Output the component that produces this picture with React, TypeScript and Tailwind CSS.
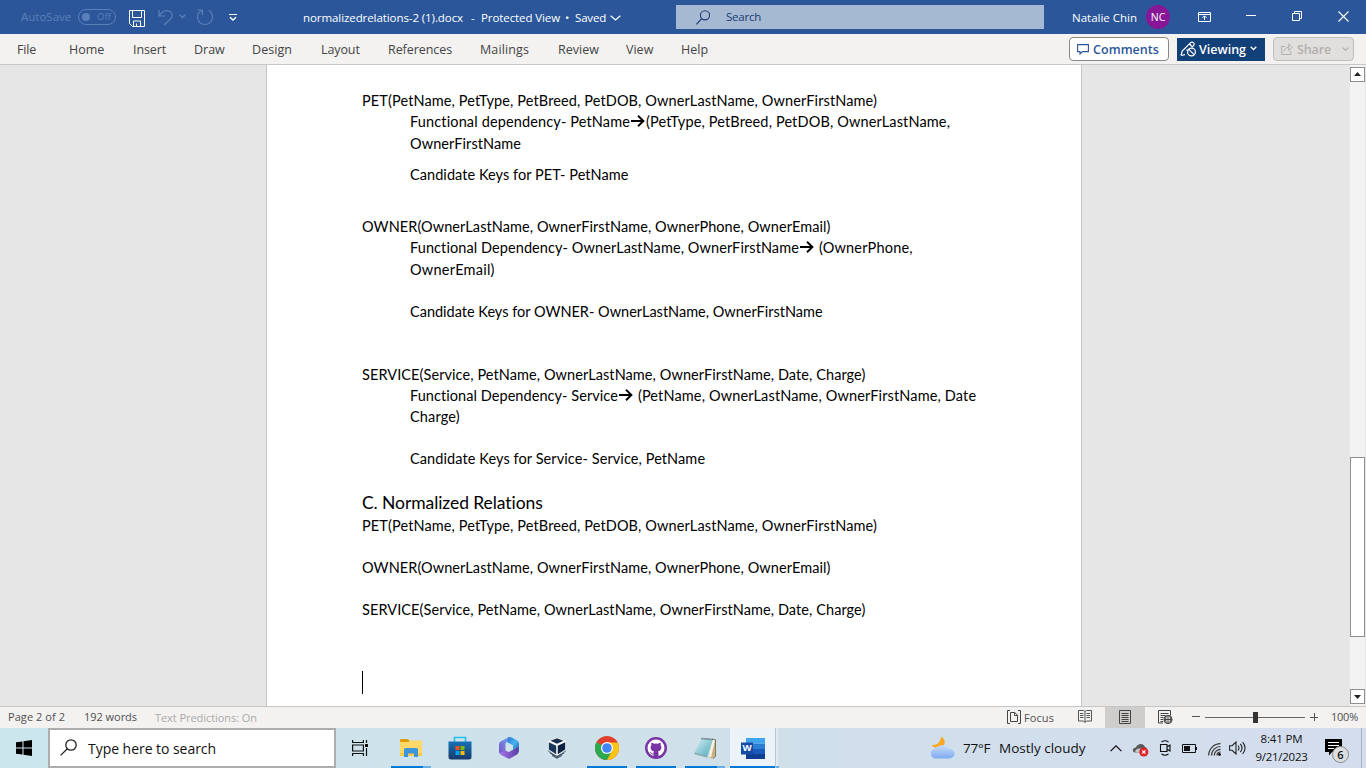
import type { ReactNode } from "react";

const Svg = ({ w, h, className = "", children }: { w: number; h: number; className?: string; children: ReactNode }) => (
  <svg width={w} height={h} viewBox={`0 0 ${w} ${h}`} fill="none" className={`shrink-0 ${className}`}>
    {children}
  </svg>
);

const tabs: [string, string][] = [
  ["File", "w-[52px] tracking-[-0.15px]"],
  ["Home", "w-[64px]"],
  ["Insert", "w-[61px] tracking-[-0.1px]"],
  ["Draw", "w-[58px]"],
  ["Design", "w-[69px] tracking-[0.06px]"],
  ["Layout", "w-[67px] tracking-[-0.1px]"],
  ["References", "w-[92px] tracking-[-0.07px]"],
  ["Mailings", "w-[78px] tracking-[0.11px]"],
  ["Review", "w-[68px]"],
  ["View", "w-[55px]"],
  ["Help", "w-[50px]"],
];

function TitleBar() {
  return (
    <header className="flex h-[34px] shrink-0 items-center bg-[#2b579a] text-[11.5px] text-white">
      <div className="flex w-[303px] items-center pl-[21px] text-[#5a80b9]">
        <span className="w-[57px]">AutoSave</span>
        <div className="mt-[-1px] flex h-4 w-[38px] items-center rounded-full border border-[#5a80b9] pl-[3px] text-[9.5px]">
          <span className="mr-[7px] size-2 rounded-full bg-[#5a80b9]" />
          Off
        </div>
        <Svg w={16} h={17} className="ml-[13px] mt-[2px] text-white">
          <path d="M.5.5h15v16h-12l-3-3zM3.5.5v7h9v-7M4.5 16v-5h7v5M7.5 13.5v3" stroke="currentColor" />
        </Svg>
        <Svg w={16} h={17} className="ml-[13px]">
          <path d="M1 1v6h6M1.4 6.6C4 2 9 .3 12.3 2.6c3 2.2 2.2 5.4 0 7.6L6 16" stroke="currentColor" strokeWidth="1.2" />
        </Svg>
        <Svg w={7} h={5} className="ml-[5px] mt-[-1px]">
          <path d="M.7.7 3.5 3.5 6.3.7" stroke="currentColor" strokeWidth="1.4" />
        </Svg>
        <Svg w={18} h={17} className="ml-[10px] mt-[1px]">
          <path d="M1.5 1h5v5M6.2 1.7C3.3 2.6 1.5 5 1.5 8c0 4.3 3.3 7.5 7.5 7.5s7.5-3.2 7.5-7.5c0-2.8-1.5-5.2-3.8-6.5" stroke="currentColor" strokeWidth="1.2" />
        </Svg>
        <Svg w={8} h={7} className="ml-[15px] text-white">
          <path d="M0 .5h8" stroke="currentColor" />
          <path d="M1 3.2 4 6l3-2.8" stroke="currentColor" strokeWidth="1.4" />
        </Svg>
      </div>
      <div className="flex w-[373px] items-center pt-[1px]">
        <span className="w-[168px] tracking-[-0.08px]">normalizedrelations-2 (1).docx</span>
        <span className="w-[10px]">-</span>
        <span className="w-[84px] tracking-[-0.09px]">Protected View</span>
        <span className="w-[10px]">•</span>
        <span className="w-[35px] tracking-[-0.18px]">Saved</span>
        <Svg w={11} h={6}>
          <path d="m.7.7 4.8 4.3 4.8-4.3" stroke="currentColor" strokeWidth="1.2" />
        </Svg>
      </div>
      <div className="flex h-6 w-[368px] items-center bg-[#a6b9d3] pl-5 text-[#1b3b70]">
        <Svg w={14} h={15}>
          <circle cx="9" cy="5.3" r="4.6" stroke="currentColor" strokeWidth="1.1" />
          <path d="M5.7 8.7.5 14.3" stroke="currentColor" strokeWidth="1.2" />
        </Svg>
        <span className="ml-4 tracking-[-0.2px]">Search</span>
      </div>
      <span className="ml-7 w-[74px] pt-[1px]">Natalie Chin</span>
      <span className="flex size-6 items-center justify-center rounded-full bg-[#881798] text-[10.5px]">NC</span>
      <Svg w={13} h={10} className="ml-7 mt-[-1px]">
        <path d="M.5.5h12v9H.5zM.5 2.5h12M6.5 8V4M4.5 5.8l2-2 2 2" stroke="currentColor" />
      </Svg>
      <Svg w={10} h={1} className="ml-[35px] mt-[-3px]">
        <path d="M0 .5h10" stroke="currentColor" />
      </Svg>
      <Svg w={10} h={10} className="ml-9 mt-[-2px]">
        <path d="M.5 2.5h7v7h-7zM2.5 2.5v-2h7v7h-2" stroke="currentColor" />
      </Svg>
      <Svg w={11} h={11} className="ml-9 mt-[-2px]">
        <path d="m.5.5 10 10M10.5.5l-10 10" stroke="currentColor" strokeWidth="1.1" />
      </Svg>
    </header>
  );
}

function Ribbon() {
  return (
    <nav className="flex h-[31px] shrink-0 items-center border-b border-[#c8c8c8] bg-[#f3f2f1] text-[12.5px] text-[#444]">
      <div className="flex w-[1069px] pl-[17px] pt-[2px]">
        {tabs.map(([name, style]) => (
          <span key={name} className={style}>{name}</span>
        ))}
      </div>
      <button className="flex h-6 w-[100px] items-center rounded border border-[#8a8886] bg-white pl-[7px] font-semibold text-[#2b579a]">
        <Svg w={12} h={11}>
          <path d="M.6.6h10.8v7H5.5L3 10V7.6H.6z" stroke="currentColor" strokeWidth="1.1" />
        </Svg>
        <span className="ml-1 mt-[2px] tracking-[0.05px]">Comments</span>
      </button>
      <button className="ml-2 flex h-[23px] w-[88px] items-center bg-[#124078] pl-[3px] font-semibold text-white">
        <Svg w={17} h={16}>
          <path d="M1 14.5 2.2 10 10.7 1.6c1.7-1.6 4.5.8 3 2.8l-1.5 1.7M1 14.5l4-.8M9.5 3l3.3 3.2M6.5 9.5l1-1" stroke="currentColor" strokeWidth="1.2" />
          <circle cx="11.5" cy="11" r="3.9" stroke="currentColor" strokeWidth="1.2" />
          <path d="m8.8 8.3 5.4 5.4" stroke="currentColor" strokeWidth="1.2" />
        </Svg>
        <span className="ml-[2px] mt-[2px]">Viewing</span>
        <Svg w={7} h={5} className="ml-1 mt-[-1px]">
          <path d="M.7.7 3.5 3.5 6.3.7" stroke="currentColor" strokeWidth="1.3" />
        </Svg>
      </button>
      <button className="ml-2 flex h-6 w-[81px] items-center rounded border border-[#c0bebc] bg-[#e1dfdd] pl-[7px] font-semibold text-[#b1afad]">
        <Svg w={12} h={12}>
          <path d="M4 3.5H.6v8h9.3V8M3 8.5c.4-2.5 2-4 4.8-4.2M7.8 1l3.4 3.3-3.4 3.4z" stroke="currentColor" />
        </Svg>
        <span className="ml-1 mt-[2px] tracking-[-0.1px]">Share</span>
        <Svg w={7} h={5} className="ml-[11px]">
          <path d="M.7.7 3.5 3.5 6.3.7" stroke="currentColor" strokeWidth="1.2" />
        </Svg>
      </button>
    </nav>
  );
}

const Arrow = ({ className = "" }: { className?: string }) => (
  <Svg w={14} h={12} className={`inline-block align-[0.5px] ${className}`}>
    <path d="M0 6h12.5M7 .8 12.4 6 7 11.2" stroke="currentColor" strokeWidth="1.9" />
  </Svg>
);

const Line = ({ className, children }: { className: string; children: ReactNode }) => (
  <p className={`h-[21px] whitespace-nowrap ${className}`}>{children}</p>
);

function Page() {
  return (
    <article className="w-[816px] border-x border-[#c6c6c6] bg-white pl-[95px] pt-[25px] font-[Lato,Carlito,sans-serif] text-[14.5px] leading-[21px] text-black">
      <Line className="tracking-[0.119px]">PET(PetName, PetType, PetBreed, PetDOB, OwnerLastName, OwnerFirstName)</Line>
      <Line className="pl-12">
        <span className="tracking-[0.14px]">Functional dependency- PetName</span>
        <Arrow className="ml-px mr-px" />
        <span className="tracking-[0.14px]">(PetType, PetBreed, PetDOB, OwnerLastName,</span>
      </Line>
      <Line className="mt-px pl-12 tracking-[0.08px]">OwnerFirstName</Line>
      <Line className="mt-[10px] pl-12 tracking-[0.06px]">Candidate Keys for PET- PetName</Line>

      <Line className="mt-[31px] tracking-[0.08px]">OWNER(OwnerLastName, OwnerFirstName, OwnerPhone, OwnerEmail)</Line>
      <Line className="pl-12">
        <span className="tracking-[0.085px]">Functional Dependency- OwnerLastName, OwnerFirstName</span>
        <Arrow className="ml-px mr-[5px]" />
        <span className="tracking-[0.2px]">(OwnerPhone,</span>
      </Line>
      <Line className="mt-px pl-12 tracking-[0.25px]">OwnerEmail)</Line>
      <Line className="mt-[21px] pl-12">Candidate Keys for OWNER- OwnerLastName, OwnerFirstName</Line>

      <Line className="mt-[42px] tracking-[0.08px]">SERVICE(Service, PetName, OwnerLastName, OwnerFirstName, Date, Charge)</Line>
      <Line className="pl-12">
        <span className="tracking-[0.06px]">Functional Dependency- Service</span>
        <Arrow className="ml-px mr-[5px]" />
        <span className="tracking-[0.14px]">(PetName, OwnerLastName, OwnerFirstName, Date</span>
      </Line>
      <Line className="pl-12 tracking-[0.15px]">Charge)</Line>
      <Line className="mt-[21px] pl-12 tracking-[0.09px]">Candidate Keys for Service- Service, PetName</Line>

      <Line className="mt-[23px] text-[17.5px] tracking-[-0.077px]">C. Normalized Relations</Line>
      <Line className="mt-[2px] tracking-[0.119px]">PET(PetName, PetType, PetBreed, PetDOB, OwnerLastName, OwnerFirstName)</Line>
      <Line className="mt-[21px] tracking-[0.08px]">OWNER(OwnerLastName, OwnerFirstName, OwnerPhone, OwnerEmail)</Line>
      <Line className="mt-[21px] tracking-[0.08px]">SERVICE(Service, PetName, OwnerLastName, OwnerFirstName, Date, Charge)</Line>
      <div className="mt-[51px] h-[23px] w-px bg-black" />
    </article>
  );
}

function ScrollBar() {
  return (
    <div className="mr-px flex w-[15px] flex-col bg-[#f3f3f3] pb-[2px] pt-[2px]">
      <div className="flex h-[15px] items-center justify-center border border-[#8f8f8f] bg-white pb-px">
        <Svg w={7} h={4}>
          <path d="M0 4h7L3.5 0z" fill="#222" />
        </Svg>
      </div>
      <div className="mt-[375px] h-[180px] border border-[#8f8f8f] bg-white" />
      <div className="mt-auto flex h-[15px] items-center justify-center border border-[#8f8f8f] bg-white">
        <Svg w={7} h={4}>
          <path d="M0 0h7L3.5 4z" fill="#222" />
        </Svg>
      </div>
    </div>
  );
}

function StatusBar() {
  return (
    <footer className="flex h-[22px] shrink-0 items-center border-t border-[#c6c6c6] bg-[#f3f2f1] text-[11px] text-[#505050]">
      <span className="w-[84px] pb-[2px] pl-2 tracking-[0.06px]">Page 2 of 2</span>
      <span className="w-[71px] pb-[2px] tracking-[-0.04px]">192 words</span>
      <span className="w-[852px] tracking-[-0.06px] text-[#a9a9a9]">Text Predictions: On</span>
      <Svg w={14} h={14} className="mt-[-2px]">
        <path d="M3 .5H.5v13H3M11 .5h2.5v13H11M3.5 2.5h4.3l2.7 2.7v6.3h-7zM7.5 2.5v3h3" stroke="#444" />
      </Svg>
      <span className="ml-[3px] w-[54px] tracking-[0.09px]">Focus</span>
      <Svg w={14} h={13} className="mt-[-2px]">
        <path d="M7 1.5v11M.5.5H5.5L7 1.5 8.5.5h5v10.5H8.5L7 12.5 5.5 11H.5zM2 3.5h3.5M2 5.5h3.5M2 7.5h3.5M8.5 3.5H12M8.5 5.5H12M8.5 7.5H12" stroke="#555" />
      </Svg>
      <div className="ml-[13px] flex h-[21px] w-10 items-center justify-center bg-[#cfcdcb]">
        <Svg w={12} h={14} className="mt-[-2px]">
          <path d="M.5.5h11v13H.5zM2.5 3.5h7M2.5 5.5h7M2.5 7.5h7M2.5 9.5h7M2.5 11.5h7" stroke="#444" />
        </Svg>
      </div>
      <Svg w={15} h={14} className="ml-[13px] mt-[-1px]">
        <path d="M5 13H.5V.5h12v5M2.5 3.5h8M2.5 5.5h5M2.5 7.5h3M2.5 9.5h2.5M2.5 11.5h2.5" stroke="#444" />
        <circle cx="10" cy="9.5" r="3.9" stroke="#444" strokeWidth="1.2" />
        <path d="M6 9.5h8M10 5.5v8M8 6.5q-1 3 0 6M12 6.5q1 3 0 6" stroke="#444" />
      </Svg>
      <Svg w={8} h={1} className="ml-[19px] mt-[-2px]">
        <path d="M0 .5h8" stroke="#555" />
      </Svg>
      <div className="ml-[5px] flex h-[11px] w-[100px] items-center">
        <span className="h-px w-[48px] bg-[#666]" />
        <span className="h-[11px] w-[5px] bg-[#333]" />
        <span className="h-px flex-1 bg-[#666]" />
      </div>
      <Svg w={8} h={8} className="ml-[5px] mt-[-2px]">
        <path d="M0 4.5h8M4.5 0v8" stroke="#555" />
      </Svg>
      <span className="ml-[13px] pb-[2px] tracking-[-0.24px]">100%</span>
    </footer>
  );
}

const ExplorerIcon = () => (
  <Svg w={22} h={20}>
    <path d="M0 3a2 2 0 0 1 1-2h7l2 2.5v3H0z" fill="#dc9a08" />
    <path d="M0 4h8.5l1.5-1.5h12V18H0z" fill="#ffd867" />
    <path d="M0 15h22v3H0z" fill="#fcc847" />
    <path d="M4 19v-7.5a1.5 1.5 0 0 1 1.5-1.5h11a1.5 1.5 0 0 1 1.5 1.5V19h-4v-3.5H8V19z" fill="#3c96dc" />
  </Svg>
);

const StoreIcon = () => (
  <Svg w={24} h={24}>
    <defs>
      <linearGradient id="store" x1="0" y1="0" x2="0" y2="1">
        <stop stopColor="#1770b5" />
        <stop offset="1" stopColor="#163a6b" />
      </linearGradient>
    </defs>
    <path d="M6.5 7V1.5h11V7" stroke="#24bff0" strokeWidth="1.6" />
    <path d="M.5 5.5h23V21a2.5 2.5 0 0 1-2.5 2.5H3A2.5 2.5 0 0 1 .5 21z" fill="url(#store)" />
    <path d="M7.500 10h4v4h-4z" fill="#f25022" />
    <path d="M12.500 10h4v4h-4z" fill="#7fba00" />
    <path d="M7.500 15h4v4h-4z" fill="#00a4ef" />
    <path d="M12.500 15h4v4h-4z" fill="#ffb900" />
  </Svg>
);

const M365Icon = () => (
  <Svg w={22} h={24}>
    <defs>
      <linearGradient id="m1" x1="0" y1="1" x2="1" y2="0">
        <stop stopColor="#7c50c8" />
        <stop offset="1" stopColor="#6fa8ee" />
      </linearGradient>
      <linearGradient id="m2" x1="0" y1="0" x2="1" y2="1">
        <stop stopColor="#2d6fd0" />
        <stop offset=".5" stopColor="#45b5f0" />
        <stop offset="1" stopColor="#264fa8" />
      </linearGradient>
      <linearGradient id="m3" x1="0" y1="0" x2="1" y2="0">
        <stop stopColor="#a877ea" />
        <stop offset="1" stopColor="#5a3da5" />
      </linearGradient>
    </defs>
    <path d="M11 1 2.5 5.500Q1 6.500 1 8.500v7q0 2.500 2.500 2.500L7.500 15V8.500Q7.500 6 11 5z" fill="url(#m1)" />
    <path d="M10 1.500q2-1 4 0l5.500 3.200Q21 5.700 21 7.500v7q0 2-2 2.500l-4-3V9.500L9 6z" fill="url(#m2)" />
    <path d="m1.500 17 6-2.500 3 1.600L20.500 11v4.500q0 2-1.500 3l-6.500 3.700q-1.500.9-3 0L3 19z" fill="url(#m3)" />
    <path d="M8 9.500 11 7.800l3.300 1.800v4.200L11 15.700l-3-1.800z" fill="#cfe3ec" />
  </Svg>
);

const BoxIcon = () => (
  <Svg w={20} h={24}>
    <path d="M1 4.500v11L10 23l9-7.500v-11L10 1z" fill="#8292a4" />
    <path d="M1 4.500 10 1l9 3.500v9.500L10 20 1 14z" fill="#f5f7fa" />
    <path d="M3.500 4.700 10 2.200l6.500 2.500L10 7.800z" fill="#15304f" />
    <path d="M1.800 6.200 9.200 9.800v8.400L1.800 13.500z" fill="#183758" />
    <path d="m10.800 9.800 7.400-3.600v7.300l-7.400 4.700z" fill="#0b2340" />
    <path d="m3 17 7 3.500 7-3.500M5 19.500l5 2.500 5-2.500" stroke="#34485e" />
  </Svg>
);

const ChromeIcon = () => (
  <Svg w={24} h={24}>
    <circle cx="12" cy="12" r="12" fill="#e2402f" />
    <path d="M12 12 1.600 6A12 12 0 0 0 12 24l5.200-9z" fill="#2da94f" />
    <path d="M12 6.500h10.700A12 12 0 0 1 12 24l5-9z" fill="#fdc418" />
    <circle cx="12" cy="12" r="6" fill="#fff" />
    <circle cx="12" cy="12" r="4.800" fill="#4285f4" />
  </Svg>
);

const GithubIcon = () => (
  <Svg w={22} h={22}>
    <circle cx="11" cy="11" r="11" fill="#7a35a5" />
    <circle cx="11" cy="11" r="8.500" fill="#fff" />
    <path d="M8.800 17c-2.200.4-2.600-1-3.600-2" stroke="#7a35a5" />
    <path d="M6.500 5.800c1.200 0 2 .6 2.500 1q2-.4 4 0c.5-.4 1.300-1 2.500-1 .4 1 .3 1.700.1 2.200 1.600 2.300.8 5.800-2.600 6.300.4.500.5 1 .5 1.800V20h-5v-3.900c0-.8.100-1.300.5-1.800-3.400-.5-4.200-4-2.600-6.300-.2-.5-.3-1.200.1-2.200z" fill="#7a35a5" />
  </Svg>
);

const NotepadIcon = () => (
  <Svg w={24} h={24}>
    <defs>
      <linearGradient id="note" x1="0" y1="0" x2="1" y2="1">
        <stop stopColor="#d3eef3" />
        <stop offset="1" stopColor="#4ea9b9" />
      </linearGradient>
    </defs>
    <path d="m19 3 4 .8-1 16.700-2 2-4-.5z" fill="#c9b282" />
    <path d="m19 3 3 1-4 17.500-2-1z" fill="#f6f2e5" />
    <path d="m19 3 3.500.8v16.700l-2.500 2" stroke="#6d6048" strokeWidth=".8" />
    <path d="M8.500 2.500 20 3.500 14 21.500 1 18z" fill="url(#note)" />
    <path d="m1 18 13 3.500.7-1.800L2 16.500z" fill="#88aeb3" />
    <path d="m8.500 2.500 11.500 1" stroke="#576f74" strokeWidth="1.800" strokeDasharray="1.200 .8" />
  </Svg>
);

const WordIcon = () => (
  <div className="relative">
    <Svg w={25} h={23}>
      <path d="M6 1h19v5.500H6z" fill="#41a5ee" />
      <path d="M6 6.500h19V12H6z" fill="#2b7cd3" />
      <path d="M6 12h19v5H6z" fill="#185abd" />
      <path d="M6 17h19v5H6z" fill="#103f91" />
      <path d="M1 5.500h12v12H1z" fill="#174ca5" />
    </Svg>
    <span className="absolute left-px top-[5.5px] w-3 text-center text-[9.5px] font-bold leading-3 text-white">W</span>
  </div>
);

const AppSlot = ({ icon, bar = "", tail = "", className = "" }: { icon: ReactNode; bar?: string; tail?: string; className?: string }) => (
  <div className={`flex h-10 w-[49px] flex-col items-center ${className}`}>
    <div className="flex h-[38px] items-center pt-[2px]">{icon}</div>
    <div className="flex h-[2px]">
      <span className={`bg-[#0078d7] ${bar}`} />
      <span className={`bg-[#6aaee6] ${tail}`} />
    </div>
  </div>
);

function Tray() {
  return (
    <>
      <Svg w={26} h={24} className="ml-[150px]">
        <defs>
          <linearGradient id="cloud" x1="0" y1="0" x2="0" y2="1">
            <stop stopColor="#c8dcfb" />
            <stop offset="1" stopColor="#7daaf0" />
          </linearGradient>
        </defs>
        <path d="M11 .5c5 3 5 8 0 11-4 1.500-8 0-9.500-2.500C7 9.500 11 6 11 .5z" fill="#f7a823" />
        <path d="M6 22.500a5 5 0 0 1-.5-10c1.500-3.500 10-5 12.500 0 8.500.5 8.500 9.500 1 10z" fill="url(#cloud)" />
      </Svg>
      <span className="ml-[7px] w-9 pt-px text-[13.5px] tracking-[-0.2px]">77°F</span>
      <span className="w-[111px] pt-px text-[13.5px]">Mostly cloudy</span>
      <Svg w={12} h={7}>
        <path d="m.6 6.200 5.400-5.400 5.400 5.400" stroke="#111" strokeWidth="1.200" />
      </Svg>
      <Svg w={17} h={14} className="ml-[10px] mt-[3px]">
        <path d="M2.500 9.500C-.5 8 1 4.500 4 4.500 5 .5 11.500-.5 13 4c2 .5 2.500 3 1 5.500z" fill="#5a5a5a" />
        <path d="M3 9.500C3 6 8 4 11 7v2.500z" fill="#c8c8c8" />
        <circle cx="11.800" cy="9" r="4.600" fill="#e0242c" />
        <path d="m10.200 7.400 3.200 3.200M13.400 7.400l-3.200 3.200" stroke="#fff" strokeWidth="1.200" />
      </Svg>
      <Svg w={12} h={16} className="ml-[10px]">
        <path d="M1.500 4.500h6.500v7H1.500zM8 7l3-2v6L8 9M2.500 2Q6-.5 9.500 2M2.500 14q3.500 2.500 7 0" stroke="#111" strokeWidth="1.100" />
      </Svg>
      <Svg w={16} h={9} className="ml-[11px] mt-px">
        <path d="M.500.500h13v8H.500zM14.500 3v3" stroke="#111" />
        <path d="M2 2h6v5H2z" fill="#111" />
      </Svg>
      <Svg w={13} h={13} className="ml-[10px] mt-[3px]">
        <path d="M.700 12.500C.700 6 6 .700 12.500.700M3.500 12.500c0-5 4-9 9-9M6.300 12.500c0-3.500 2.700-6.200 6.200-6.200M9 12.500C9 10.500 10.500 9 12.500 9" stroke="#333" strokeWidth="1.200" />
        <circle cx="11.500" cy="11.500" r="1.400" fill="#111" />
      </Svg>
      <Svg w={17} h={14} className="ml-2">
        <path d="M.600 4.700h2.500L7 1v12L3.100 9.300H.600zM9 4.500q2 2.500 0 5M11.300 2.800q3.500 4.200 0 8.400M13.600 1.200q5 5.800 0 11.600" stroke="#222" strokeWidth="1.100" />
      </Svg>
      <div className="ml-[7px] flex w-[57px] flex-col items-center pb-px text-[11.5px] leading-[18px]">
        <span className="tracking-[-0.14px]">8:41 PM</span>
        <span className="tracking-[-0.27px]">9/21/2023</span>
      </div>
      <div className="relative ml-[15px] mt-[-2px]">
        <Svg w={17} h={17}>
          <path d="M0 0h17v13H7l-3 3.500V13H0z" fill="#000" />
          <path d="M3 3.500h11M3 6.500h11M3 9.500h6" stroke="#fff" />
        </Svg>
        <span className="absolute left-[7px] top-[7px] flex size-[17px] items-center justify-center rounded-full border border-[#888] bg-[#dcdfe2] text-[11px] font-semibold">6</span>
      </div>
      <span className="ml-auto mr-1 h-10 w-px bg-[#a9b4c2]" />
    </>
  );
}

function TaskBar() {
  return (
    <footer className="flex h-10 shrink-0 items-center bg-gradient-to-r from-[#cce6ee] via-[#cfe0ea] to-[#d4ddee] text-[#111]">
      <Svg w={16} h={16} className="mx-4">
        <path d="M0 2.300 6.500 1.400v6.100H0zM7.500 1.200 16 0v7.500H7.500zM0 8.500h6.500v6.100L0 13.700zM7.500 8.500H16V16l-8.500-1.200z" fill="#000" />
      </Svg>
      <div className="flex h-10 w-[288px] items-center border-2 border-[#adadad] bg-white pl-[10px] text-[14px]">
        <Svg w={17} h={17} className="mt-[-1px]">
          <circle cx="11" cy="6" r="5.200" stroke="#222" strokeWidth="1.300" />
          <path d="M7.300 9.700.600 16.400" stroke="#222" strokeWidth="1.300" />
        </Svg>
        <span className="ml-[11px] pt-[2px] tracking-[-0.04px]">Type here to search</span>
      </div>
      <Svg w={17} h={16} className="ml-4 mr-[17px] mt-[-1px]">
        <path d="M.600 0v2.500h10.800V0M.600 5h10.800v6H.600zM.600 16v-2.500h10.800V16M14.500 0v3M14.500 8v8" stroke="#111" strokeWidth="1.200" />
        <path d="M13 4h3v3h-3z" fill="#111" />
      </Svg>
      <AppSlot icon={<ExplorerIcon />} bar="w-8" tail="w-2" />
      <AppSlot icon={<StoreIcon />} />
      <AppSlot icon={<M365Icon />} />
      <AppSlot icon={<BoxIcon />} className="pr-[2px]" />
      <AppSlot icon={<ChromeIcon />} bar="w-10" />
      <AppSlot icon={<GithubIcon />} bar="w-10" />
      <AppSlot icon={<NotepadIcon />} bar="w-8" tail="w-2" />
      <div className="flex h-10 w-[49px] pl-px">
        <AppSlot icon={<WordIcon />} bar="w-[45px]" className="w-[45px]! bg-[#ebf3f8]" />
        <AppSlot icon={null} tail="w-[3px]" className="w-[3px]! border-l border-[#b4c6d3] bg-[#dfeaf1]" />
      </div>
      <div className="w-[2px]" />
      <Tray />
    </footer>
  );
}

export default function App() {
  return (
    <div className="flex h-[768px] w-[1366px] flex-col overflow-hidden font-['Open_Sans','Noto_Sans',sans-serif] leading-none">
      <TitleBar />
      <Ribbon />
      <main className="flex min-h-0 flex-1 bg-[#e6e6e6] pl-[266px]">
        <Page />
        <div className="ml-auto flex">
          <ScrollBar />
        </div>
      </main>
      <StatusBar />
      <TaskBar />
    </div>
  );
}
